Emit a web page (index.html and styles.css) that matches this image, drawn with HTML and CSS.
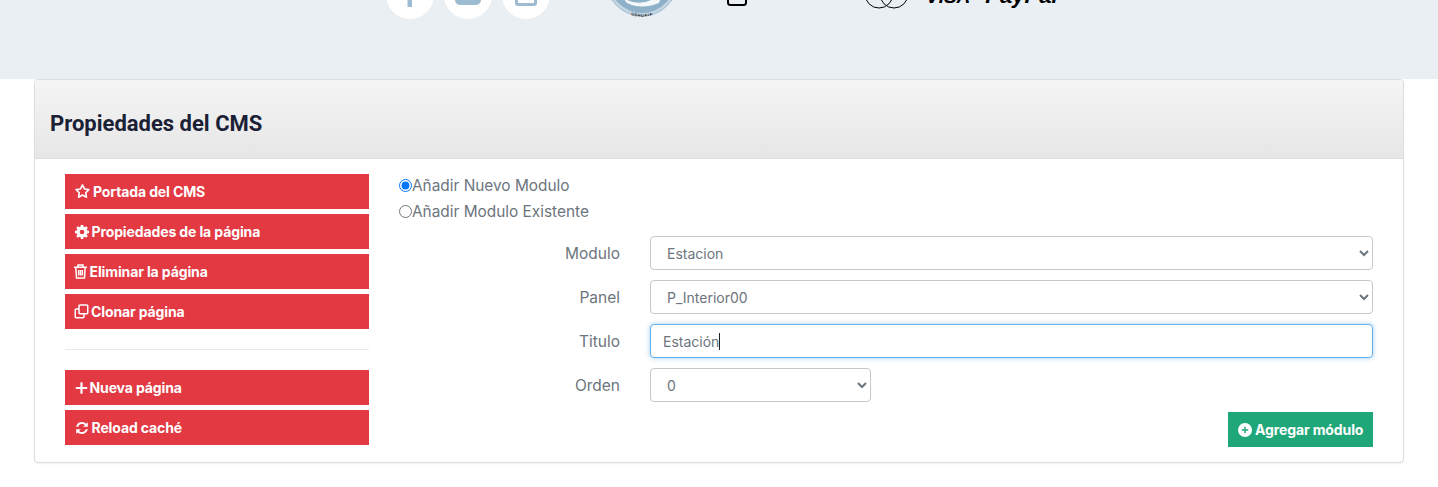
FILE: index.html
```html
<!DOCTYPE html>
<html lang="es">
<head>
<meta charset="utf-8">
<title>Propiedades del CMS</title>
<link rel="stylesheet" href="styles.css">
</head>
<body>
<footer class="site-footer">
  <div class="social">
    <span class="social-btn"><svg width="28" height="24" viewBox="0 0 28 24"><path d="M11.500 24V14H8v-4h3.500V7c0-4 2.500-6 6-6h3v4h-2.500c-1.500 0-2 .7-2 2v3h4.500l-.6 4h-3.900v10z" fill="#9dbbd1"/></svg></span>
    <span class="social-btn"><svg width="28" height="24" viewBox="0 0 28 24"><path d="M1 0h26v17a5 5 0 0 1-5 5H6a5 5 0 0 1-5-5z" fill="#9dbbd1"/></svg></span>
    <span class="social-btn"><svg width="28" height="24" viewBox="0 0 28 24"><path fill-rule="evenodd" d="M3 0h22v20a3 3 0 0 1-3 3H6a3 3 0 0 1-3-3zM6 15v5h16v-5z" fill="#9dbbd1"/></svg></span>
  </div>
  <svg class="seal" width="66" height="20" viewBox="0 0 66 20">
    <defs><path id="seal-arc" d="M3 -4A32 32 0 0 0 63 -4"/></defs>
    <circle cx="33" cy="-20" r="36" fill="#c5d6e3" stroke="#9dbbd1"/>
    <circle cx="33" cy="-20" r="33" fill="#8fb0c9"/>
    <path d="M14 -2Q34 10 54 -8L50 3Q32 10 18 3z" fill="#fff" opacity=".9"/>
    <text class="seal-text"><textPath href="#seal-arc" startOffset="50%" text-anchor="middle">USHUAIA</textPath></text>
  </svg>
  <svg class="bag" width="22" height="8" viewBox="0 0 22 8"><path d="M2 -4V2.500a2.500 2.500 0 0 0 2.500 2.500h13a2.500 2.500 0 0 0 2.500-2.500V-4" fill="none" stroke="#000" stroke-width="2"/></svg>
  <div class="pay">
    <svg width="46" height="9" viewBox="0 0 46 9"><circle cx="15" cy="-6" r="14" fill="none" stroke="#000"/><circle cx="30" cy="-6" r="14" fill="none" stroke="#000"/></svg>
    <span class="visa">VISA</span>
    <span class="paypal">PayPal</span>
  </div>
</footer>

<section class="card">
  <header class="card-head"><h1>Propiedades del CMS</h1></header>
  <div class="card-body">
    <aside class="side">
      <div class="btn-stack">
        <a class="btn btn-red"><svg class="ico ico-star" viewBox="1 1.500 22 22"><path d="M12 2.800l2.900 6 6.500.9-4.700 4.600 1.100 6.500-5.800-3.100-5.800 3.100 1.100-6.500-4.700-4.600 6.500-.9z" fill="none" stroke="#fff" stroke-width="2.400" stroke-linejoin="round"/></svg>Portada del CMS</a>
        <a class="btn btn-red"><svg class="ico ico-gear" viewBox="0 0 24 24"><path fill="#fff" fill-rule="evenodd" d="M10 1h4l.6 3.200 1.700.7L19 3.100 21.900 6 20 8.700l.7 1.700 3.300.6v4l-3.300.6-.7 1.700L22 20l-2.900 2.900-2.800-1.900-1.700.7L14 25h-4l-.6-3.300-1.700-.7L5 22.900 2.100 20 4 17.300l-.7-1.700L0 15v-4l3.300-.6.700-1.700L2.100 6 5 3.100l2.700 1.800 1.700-.7zM12 9a4 4 0 1 0 0 8 4 4 0 0 0 0-8z" transform="translate(0 -1)"/></svg>Propiedades de la página</a>
        <a class="btn btn-red"><svg class="ico ico-trash" viewBox="0 0 21 24"><path fill="none" stroke="#fff" stroke-width="2.400" d="M0 5.200h21M6.500 5V1.500h8V5M3 5.500l1 17h13l1-17M7.500 9.500v9M10.500 9.500v9M13.500 9.500v9"/></svg>Eliminar la página</a>
        <a class="btn btn-red"><svg class="ico ico-copy" viewBox="0 0 24 24"><path fill="none" stroke="#fff" stroke-width="2.400" stroke-linejoin="round" d="M8 3a1.500 1.500 0 0 1 1.500-1.500h11A1.500 1.500 0 0 1 22 3v11a1.500 1.500 0 0 1-1.500 1.500h-11A1.500 1.500 0 0 1 8 14zM8 8H3.500A1.500 1.500 0 0 0 2 9.500v11A1.500 1.500 0 0 0 3.500 22h11a1.500 1.500 0 0 0 1.500-1.500V16"/></svg>Clonar página</a>
      </div>
      <hr class="rule">
      <div class="btn-stack">
        <a class="btn btn-red"><svg class="ico ico-plus" viewBox="0 0 24 24"><path fill="none" stroke="#fff" stroke-width="4" stroke-linecap="round" d="M12 3v18M3 12h18"/></svg>Nueva página</a>
        <a class="btn btn-red"><svg class="ico ico-gear" viewBox="0 0 24 24"><path fill="#fff" d="M12 1.500a10.500 10.500 0 0 1 7.300 3L22 2v8h-8l3-3a7 7 0 0 0-11.600 3H2A10.500 10.500 0 0 1 12 1.500zM2 14h8l-3 3a7 7 0 0 0 11.600-3H22a10.500 10.500 0 0 1-17.300 5.500L2 22z"/></svg>Reload caché</a>
      </div>
    </aside>
    <form class="main">
      <label class="radio-line"><input type="radio" name="m" checked>Añadir Nuevo Modulo</label>
      <label class="radio-line"><input type="radio" name="m">Añadir Modulo Existente</label>
      <div class="fields">
        <div class="row">
          <label class="lbl">Modulo</label>
          <select class="ctl"><option>Estacion</option></select>
        </div>
        <div class="row">
          <label class="lbl">Panel</label>
          <select class="ctl"><option>P_Interior00</option></select>
        </div>
        <div class="row">
          <label class="lbl">Titulo</label>
          <div class="ctl ctl-focus">Estación<span class="caret"></span></div>
        </div>
        <div class="row">
          <label class="lbl">Orden</label>
          <select class="ctl ctl-small"><option>0</option></select>
        </div>
      </div>
      <div class="actions">
        <a class="btn btn-green"><svg class="ico ico-add" viewBox="0 0 24 24"><circle cx="12" cy="12" r="12" fill="#fff"/><path d="M12 6.500v11M6.500 12h11" stroke="#20a779" stroke-width="2.400"/></svg>Agregar módulo</a>
      </div>
    </form>
  </div>
</section>
</body>
</html>
```

FILE: styles.css
```css
* { box-sizing: border-box; }
html, body { margin: 0; padding: 0; }
body {
  width: 1438px;
  height: 487px;
  overflow: hidden;
  background: #fff;
  font-family: Inter, "Open Sans", sans-serif;
  color: #6c757d;
}
.site-footer {
  height: 79px;
  background: #eaeff3;
  display: flex;
  align-items: flex-start;
  padding-left: 386px;
  overflow: hidden;
}
.social { display: flex; gap: 10px; margin-top: -29px; }
.social-btn {
  width: 48px;
  height: 48px;
  border-radius: 50%;
  background: #fff;
  display: flex;
  align-items: flex-end;
  justify-content: center;
  padding-bottom: 12px;
  overflow: hidden;
}
.social-btn svg { flex: none; }
.seal { margin-left: 59px; display: block; flex: none; }
.seal-text { font-family: "Liberation Sans", sans-serif; font-size: 4px; font-weight: 700; fill: #222; letter-spacing: .6px; }
.bag { margin-left: 51px; display: block; flex: none; }
.pay { margin-left: 116px; display: flex; align-items: flex-start; }
.pay svg { display: block; flex: none; }
.visa, .paypal {
  display: block;
  color: #000;
  font-family: "Liberation Sans", sans-serif;
  font-style: italic;
  font-weight: 700;
  line-height: 20px;
  white-space: nowrap;
}
.visa { margin-left: 16px; margin-top: -13px; font-size: 19px; }
.paypal { margin-left: 15px; margin-top: -14px; font-size: 22px; }

.card {
  margin: 0 34px;
  width: 1370px;
  height: 384px;
  border: 1px solid #dcdfe2;
  border-radius: 4px;
  background: #fff;
  box-shadow: 0 1px 2px rgba(0,0,0,.06);
  overflow: hidden;
}
.card-head {
  height: 79px;
  padding: 8px 15px 0;
  display: flex;
  align-items: center;
  background: linear-gradient(#f5f5f5, #e6e6e6);
  border-bottom: 1px solid #dcdfe2;
}
.card-head h1 {
  margin: 0;
  font-family: Roboto, sans-serif;
  font-size: 22px;
  font-weight: 700;
  color: #1a2035;
}
.card-body { display: flex; padding: 13px 30px 0; }
.side { width: 304px; flex: none; padding-top: 2px; }
.btn-stack { display: flex; flex-direction: column; gap: 5px; }
.btn {
  height: 35px;
  display: flex;
  align-items: center;
  padding: 0 10px;
  color: #fff;
  font-size: 14px;
  font-weight: 700;
  letter-spacing: -.12px;
  white-space: nowrap;
}
.btn-red { background: #e23943; }
.btn-green { background: #20a779; width: 145px; }
.ico { flex: none; }
.ico-star { width: 15px; height: 15px; margin-right: 3px; }
.ico-gear { width: 14px; height: 14px; margin-right: 2.500px; }
.ico-trash { width: 13px; height: 15px; margin-left: -1px; margin-right: 2.500px; }
.ico-copy { width: 15px; height: 15px; margin-left: -1px; margin-right: 2px; }
.ico-plus { width: 13px; height: 14px; margin-right: 1.500px; }
.ico-add { width: 14px; height: 14px; margin-right: 3px; }
.rule { margin: 20px 0; border: 0; border-top: 1px solid #e9e9e9; height: 1px; }

.main { flex: 1; padding-left: 30px; }
.radio-line {
  display: flex;
  align-items: center;
  height: 26px;
  font-size: 15.400px;
  color: #6c757d;
}
.radio-line input { margin: 0; width: 13px; height: 13px; accent-color: #0075ff; flex: none; }
.fields { display: flex; flex-direction: column; gap: 10px; margin-top: 12px; }
.row { display: flex; align-items: center; }
.lbl { width: 221px; flex: none; text-align: right; font-size: 15.500px; color: #6c757d; }
.ctl {
  margin-left: 30px;
  width: 723px;
  height: 34px;
  border: 1px solid #c8c8c8;
  border-radius: 4px;
  background: #fff;
  font-family: inherit;
  font-size: 14px;
  color: #6c757d;
  padding: 0 12px;
}
select.ctl { appearance: auto; }
.ctl-focus {
  display: flex;
  align-items: center;
  border-color: #66afe9;
  box-shadow: 0 0 5px rgba(102,175,233,.6);
}
.caret { display: block; width: 1px; height: 17px; background: #222; }
.ctl-small { width: 221px; }
.actions { display: flex; justify-content: flex-end; margin-top: 10px; }
```
